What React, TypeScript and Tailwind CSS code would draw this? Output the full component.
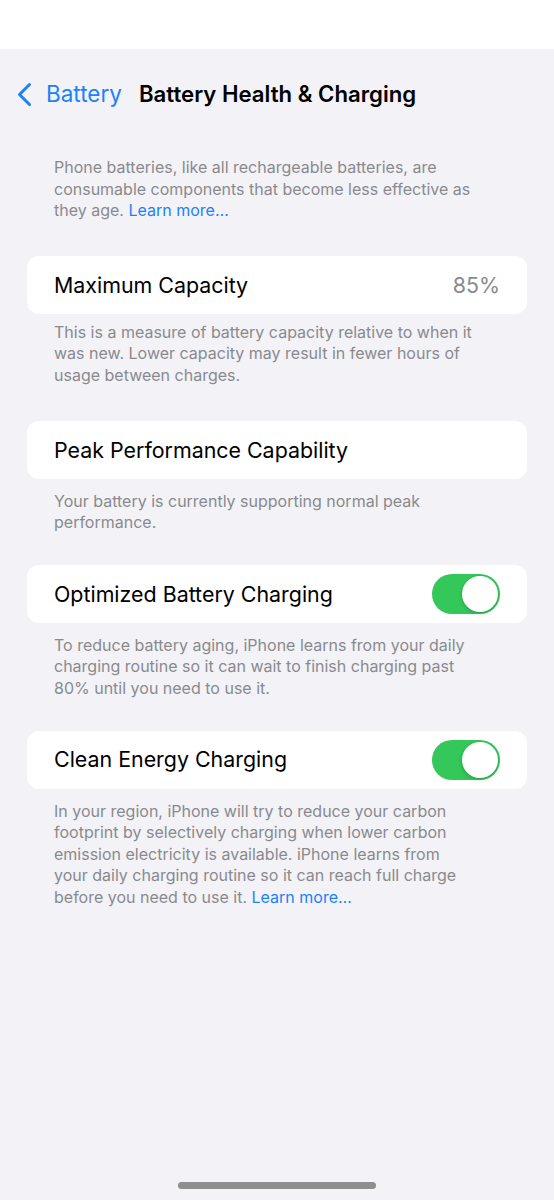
import React from 'react';

const Toggle = () => (
  <div className="w-[68px] h-[40px] rounded-full bg-[#34c759] p-[2px] flex justify-end">
    <div className="w-[36px] h-[36px] rounded-full bg-white shadow-[0_0_0_1px_rgba(0,0,0,0.04),0_2px_4px_rgba(0,0,0,0.15)]" />
  </div>
);

const Card = ({ children }: { children: React.ReactNode }) => (
  <div className="mx-[27px] h-[58px] rounded-[12px] bg-white pl-[27px] pr-[27px] flex items-center justify-between">
    {children}
  </div>
);

const Footer = ({ children, className = '' }: { children: React.ReactNode; className?: string }) => (
  <p className={`pl-[54px] pr-[80px] text-[16px] leading-[21.6px] text-[#8a8a8e] ${className}`}>{children}</p>
);

export default function App() {
  return (
    <div className="min-h-[1200px] bg-[#f2f2f7] flex flex-col" style={{ fontFamily: 'Inter, "Noto Sans", sans-serif' }}>
      <div className="h-[49px] bg-white" />
      <nav className="h-[90px] flex items-center pl-[17px]">
        <svg width="15" height="25" viewBox="0 0 15 25" fill="none" className="mr-[14px]">
          <path d="M12.5 2.5 L2.5 12.5 L12.5 22.5" stroke="#1a82fb" strokeWidth="3" strokeLinecap="round" strokeLinejoin="round" />
        </svg>
        <span className="text-[22.5px] text-[#1a82fb]">Battery</span>
        <span className="ml-[17px] text-[22.2px] font-semibold text-black">Battery Health &amp; Charging</span>
      </nav>

      <Footer className="mt-[18px]">
        Phone batteries, like all rechargeable batteries, are consumable components that become less effective as they age.{' '}
        <span className="text-[#1a82fb]">Learn more…</span>
      </Footer>

      <div className="mt-[34px]">
        <Card>
          <span className="text-[21.4px] text-black">Maximum Capacity</span>
          <span className="text-[21.4px] text-[#8a8a8e]">85%</span>
        </Card>
      </div>
      <Footer className="mt-[8px]">
        This is a measure of battery capacity relative to when it was new. Lower capacity may result in fewer hours of usage between charges.
      </Footer>

      <div className="mt-[34px]">
        <Card>
          <span className="text-[21.4px] text-black">Peak Performance Capability</span>
        </Card>
      </div>
      <Footer className="mt-[12px]">
        Your battery is currently supporting normal peak performance.
      </Footer>

      <div className="mt-[31px]">
        <Card>
          <span className="text-[21.4px] text-black">Optimized Battery Charging</span>
          <Toggle />
        </Card>
      </div>
      <Footer className="mt-[12px]">
        To reduce battery aging, iPhone learns from your daily charging routine so it can wait to finish charging past 80% until you need to use it.
      </Footer>

      <div className="mt-[31px]">
        <Card>
          <span className="text-[21.4px] text-black">Clean Energy Charging</span>
          <Toggle />
        </Card>
      </div>
      <Footer className="mt-[12px]">
        In your region, iPhone will try to reduce your carbon footprint by selectively charging when lower carbon emission electricity is available. iPhone learns from your daily charging routine so it can reach full charge before you need to use it.{' '}
        <span className="text-[#1a82fb]">Learn more…</span>
      </Footer>

      <div className="mt-auto pb-[11px] flex justify-center">
        <div className="w-[198px] h-[7px] rounded-full bg-[#8e8e8e]" />
      </div>
    </div>
  );
}
